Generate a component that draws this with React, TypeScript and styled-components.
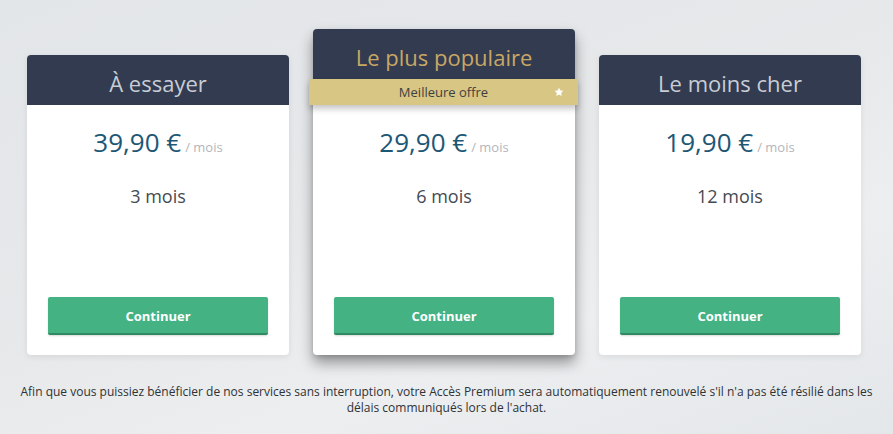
import React from "react";
import styled, { createGlobalStyle } from "styled-components";

const Global = createGlobalStyle`
  html, body { margin: 0; padding: 0; }
  body {
    width: 893px;
    height: 434px;
    overflow: hidden;
    font-family: "Open Sans", "Noto Sans", sans-serif;
    background: linear-gradient(160deg, #e3e6e9 0%, #e6e8ea 45%, #eceef0 70%, #e4e7e9 100%);
  }
`;

const Page = styled.div`
  display: flex;
  flex-direction: column;
  align-items: center;
  padding-top: 29px;
  height: 434px;
  box-sizing: border-box;
`;

const Row = styled.div`
  display: flex;
  align-items: flex-end;
  gap: 24px;
  margin-left: -5px;
`;

const Card = styled.div<{ $featured?: boolean }>`
  width: 262px;
  background: #fff;
  border-radius: 4px;
  display: flex;
  flex-direction: column;
  position: relative;
  z-index: ${(p) => (p.$featured ? 2 : 1)};
  box-shadow: ${(p) =>
    p.$featured
      ? "0 8px 14px rgba(0,0,0,0.38), 0 2px 4px rgba(0,0,0,0.12)"
      : "0 2px 6px rgba(0,0,0,0.08)"};
`;

const Header = styled.div<{ $featured?: boolean }>`
  height: 50px;
  background: #323b4f;
  border-radius: 4px 4px 0 0;
  display: flex;
  align-items: center;
  justify-content: center;
  font-size: 22px;
  color: ${(p) => (p.$featured ? "#c9a765" : "#c8cdd5")};
  padding-top: ${(p) => (p.$featured ? "5px" : "6px")};
  box-sizing: border-box;
`;

const Ribbon = styled.div`
  position: relative;
  margin: 0 -3px 0 -4px;
  height: 26px;
  background: #d8c684;
  display: flex;
  align-items: center;
  justify-content: center;
  font-size: 13px;
  color: #3f3f3f;
  box-shadow: 0 4px 6px rgba(0,0,0,0.22);
`;

const Star = styled.svg`
  position: absolute;
  right: 14px;
  top: 8px;
  width: 10px;
  height: 10px;
`;

const Body = styled.div`
  height: 250px;
  box-sizing: border-box;
  padding: 22px 21px 20px;
  display: flex;
  flex-direction: column;
  align-items: center;
`;

const Price = styled.div`
  display: flex;
  align-items: baseline;
  line-height: 30px;
`;

const Amount = styled.span`
  font-size: 26px;
  color: #1d5776;
`;

const Per = styled.span`
  font-size: 13px;
  color: #b3b6ba;
  margin-left: 4px;
`;

const Duration = styled.div`
  margin-top: 22px;
  font-size: 18px;
  line-height: 24px;
  color: #454a52;
`;

const Spacer = styled.div`
  flex: 1;
`;

const Button = styled.button`
  width: 220px;
  height: 38px;
  border: none;
  border-bottom: 2px solid #2f8a62;
  border-radius: 2px;
  background: #44b283;
  color: #fff;
  font-family: "Open Sans", "Noto Sans", sans-serif;
  font-weight: 700;
  font-size: 13px;
  box-shadow: 0 1px 2px rgba(0,0,0,0.15);
  padding: 2px 0 0;
`;

const Note = styled.p`
  margin: 29px 0 0;
  width: 870px;
  text-align: center;
  font-size: 12px;
  line-height: 16px;
  color: #2f3236;
`;

const plans = [
  { title: "À essayer", price: "39,90 €", months: "3 mois" },
  { title: "Le plus populaire", price: "29,90 €", months: "6 mois", featured: true },
  { title: "Le moins cher", price: "19,90 €", months: "12 mois" },
];

export default function App() {
  return (
    <>
      <Global />
      <Page>
        <Row>
          {plans.map((p) => (
            <Card key={p.title} $featured={p.featured}>
              <Header $featured={p.featured}>{p.title}</Header>
              {p.featured && (
                <Ribbon>
                  Meilleure offre
                  <Star viewBox="0 0 24 24">
                    <path
                      fill="#fff"
                      d="M12 1.5l3.2 6.9 7.3.8-5.4 5 1.5 7.3L12 17.8l-6.6 3.7 1.5-7.3-5.4-5 7.3-.8z"
                    />
                  </Star>
                </Ribbon>
              )}
              <Body>
                <Price>
                  <Amount>{p.price}</Amount>
                  <Per>/ mois</Per>
                </Price>
                <Duration>{p.months}</Duration>
                <Spacer />
                <Button>Continuer</Button>
              </Body>
            </Card>
          ))}
        </Row>
        <Note>
          Afin que vous puissiez bénéficier de nos services sans interruption, votre Accès Premium sera automatiquement renouvelé s'il n'a pas été résilié dans les délais communiqués lors de l'achat.
        </Note>
      </Page>
    </>
  );
}
